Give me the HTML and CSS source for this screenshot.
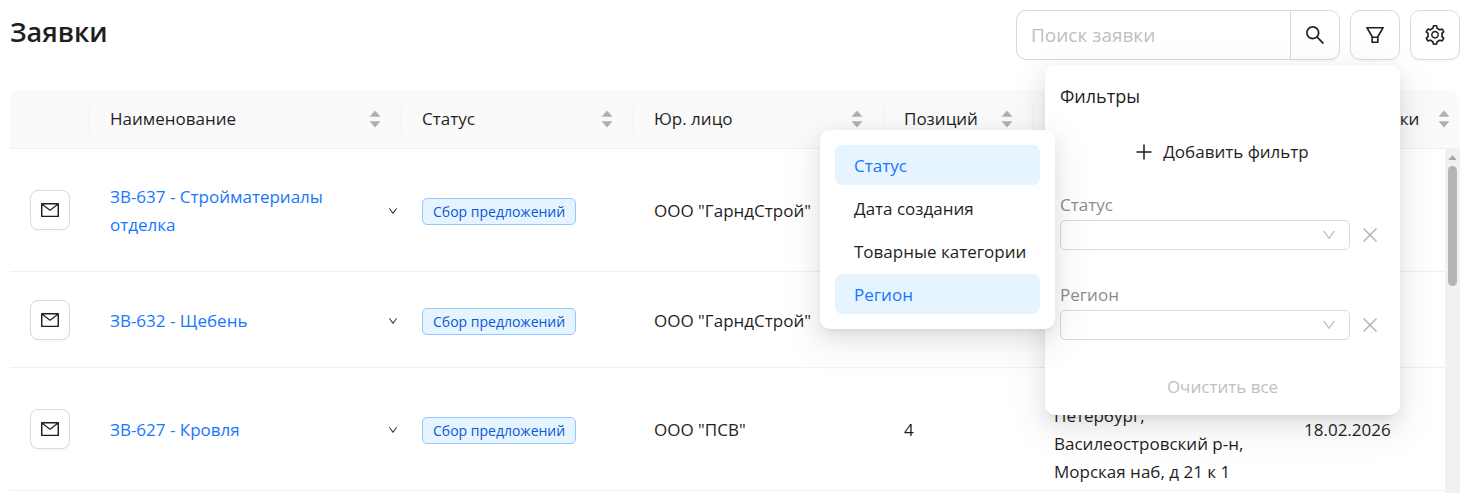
FILE: index.html
```html
<!DOCTYPE html>
<html lang="ru">
<head>
    <meta charset="UTF-8">
    <meta name="viewport" content="width=device-width, initial-scale=1.0">
    <title>Заявки</title>
    <link rel="stylesheet" href="styles.css">
</head>
<body>
    <!-- shared icons -->
    <svg class="sprite" aria-hidden="true">
        <symbol id="mail" viewBox="64 64 896 896"><path d="M928 160H96c-17.7 0-32 14.3-32 32v640c0 17.7 14.3 32 32 32h832c17.7 0 32-14.3 32-32V192c0-17.7-14.3-32-32-32zm-40 110.8V792H136V270.8l-27.6-21.5 39.3-50.5 42.8 33.3h643.1l42.8-33.3 39.3 50.5-27.7 21.5zM833.6 232L512 482 190.4 232l-42.8-33.3-39.3 50.5 27.6 21.5 341.6 265.6a55.99 55.99 0 0068.7 0L888 270.8l27.6-21.5-39.3-50.5-42.7 33.2z"/></symbol>
        <symbol id="down" viewBox="64 64 896 896"><path d="M884 256h-75c-5.1 0-9.9 2.5-12.9 6.6L512 654.2 227.9 262.6c-3-4.1-7.8-6.6-12.9-6.6h-75c-6.5 0-10.3 7.4-6.5 12.7l352.6 486.1c12.8 17.6 39 17.6 51.7 0l352.6-486.1c3.9-5.3.1-12.7-6.4-12.7z"/></symbol>
        <symbol id="sort" viewBox="0 0 12 18"><path d="M6 0.5l5.5 6.2h-11zM6 17.5l5.5-6.2h-11z"/></symbol>
        <symbol id="close" viewBox="0 0 14 14"><path d="M0.5 0.5l13 13M13.5 0.5l-13 13" fill="none" stroke="currentColor" stroke-width="1.5"/></symbol>
    </svg>

    <header class="header">
        <h1 class="title">Заявки</h1>
        <div class="tools">
            <form class="search">
                <input type="search" class="search-input" placeholder="Поиск заявки" aria-label="Поиск заявки">
                <button type="button" class="tool-btn search-btn" aria-label="Найти">
                    <svg class="icon" viewBox="64 64 896 896"><path d="M909.6 854.5L649.9 594.8C690.2 542.7 712 479 712 412c0-80.2-31.3-155.4-87.9-212.1-56.6-56.7-132-87.9-212.1-87.9s-155.5 31.3-212.1 87.9C143.2 256.5 112 331.8 112 412c0 80.1 31.3 155.5 87.9 212.1C256.5 680.8 331.8 712 412 712c67 0 130.6-21.8 182.7-62l259.7 259.6a8.2 8.2 0 0011.6 0l43.6-43.5a8.2 8.2 0 000-11.6zM570.4 570.4C528 612.7 471.8 636 412 636s-116-23.3-158.4-65.6C211.3 528 188 471.8 188 412s23.3-116.1 65.6-158.4C296 211.3 352.2 188 412 188s116.1 23.2 158.4 65.6S636 352.2 636 412s-23.3 116.1-65.6 158.4z"/></svg>
                </button>
            </form>
            <div class="filter">
                <button type="button" class="tool-btn" aria-label="Фильтры">
                    <svg class="icon" viewBox="64 64 896 896"><path d="M880.1 154H143.9c-24.5 0-39.8 26.7-27.5 48L349 597.4V838c0 17.7 14.2 32 31.8 32h262.4c17.6 0 31.8-14.3 31.8-32V597.4L907.7 202c12.2-21.3-3.1-48-27.6-48zM603.4 798H420.6V642h182.9v156zm9.6-236.6l-9.5 16.6h-183l-9.5-16.6L212.7 226h598.6L613 561.4z"/></svg>
                </button>
                <div class="panel">
                    <h2 class="panel-title">Фильтры</h2>
                    <button type="button" class="text-btn add-btn">
                        <svg class="plus" viewBox="0 0 16 16"><path d="M8 0.5v15M0.5 8h15" fill="none" stroke="currentColor" stroke-width="1.5"/></svg>
                        Добавить фильтр
                    </button>
                    <div class="field">
                        <label class="field-label" for="f-status">Статус</label>
                        <div class="field-row">
                            <div class="select">
                                <select id="f-status"><option></option></select>
                                <svg class="arrow"><use href="#down"/></svg>
                            </div>
                            <button type="button" class="remove" aria-label="Удалить"><svg><use href="#close"/></svg></button>
                        </div>
                    </div>
                    <div class="field">
                        <label class="field-label" for="f-region">Регион</label>
                        <div class="field-row">
                            <div class="select">
                                <select id="f-region"><option></option></select>
                                <svg class="arrow"><use href="#down"/></svg>
                            </div>
                            <button type="button" class="remove" aria-label="Удалить"><svg><use href="#close"/></svg></button>
                        </div>
                    </div>
                    <button type="button" class="text-btn clear-btn" disabled>Очистить все</button>

                    <div class="menu">
                        <button type="button" class="menu-item active">Статус</button>
                        <button type="button" class="menu-item">Дата создания</button>
                        <button type="button" class="menu-item">Товарные категории</button>
                        <button type="button" class="menu-item active">Регион</button>
                    </div>
                </div>
            </div>
            <button type="button" class="tool-btn" aria-label="Настройки">
                <svg class="icon" viewBox="64 64 896 896"><path d="M924.8 625.7l-65.5-56c3.1-19 4.7-38.4 4.7-57.8s-1.6-38.8-4.7-57.8l65.5-56a32.03 32.03 0 009.3-35.2l-.9-2.6a443.74 443.74 0 00-79.7-137.9l-1.8-2.1a32.12 32.12 0 00-35.1-9.5l-81.3 28.9c-30-24.6-63.5-44-99.7-57.6l-15.7-85a32.05 32.05 0 00-25.8-25.7l-2.7-.5c-52.1-9.4-106.9-9.4-159 0l-2.7.5a32.05 32.05 0 00-25.8 25.7l-15.8 85.4a351.86 351.86 0 00-99 57.4l-81.9-29.1a32 32 0 00-35.1 9.5l-1.8 2.1a446.02 446.02 0 00-79.7 137.9l-.9 2.6c-4.5 12.5-.8 26.5 9.3 35.2l66.3 56.6c-3.1 18.8-4.6 38-4.6 57.1 0 19.2 1.5 38.4 4.6 57.1L99 625.5a32.03 32.03 0 00-9.3 35.2l.9 2.6c18.1 50.4 44.9 96.9 79.7 137.9l1.8 2.1a32.12 32.12 0 0035.1 9.5l81.9-29.1c29.8 24.5 63.1 43.9 99 57.4l15.8 85.4a32.05 32.05 0 0025.8 25.7l2.7.5a449.4 449.4 0 00159 0l2.7-.5a32.05 32.05 0 0025.8-25.7l15.7-85a350 350 0 0099.7-57.6l81.3 28.9a32 32 0 0035.1-9.5l1.8-2.1c34.8-41.1 61.6-87.5 79.7-137.9l.9-2.6c4.5-12.3.8-26.3-9.3-35zM788.3 465.9c2.5 15.1 3.8 30.6 3.8 46.1s-1.3 31-3.8 46.1l-6.6 40.1 74.7 63.9a370.03 370.03 0 01-42.6 73.6L721 702.8l-31.4 25.8c-23.9 19.6-50.5 35-79.3 45.8l-38.1 14.3-17.9 97a377.5 377.5 0 01-85 0l-17.9-97.2-37.8-14.5c-28.5-10.8-55-26.2-78.7-45.7l-31.4-25.9-93.4 33.2c-17-22.9-31.2-47.6-42.6-73.6l75.5-64.5-6.5-40c-2.4-14.9-3.7-30.3-3.7-45.5 0-15.3 1.2-30.6 3.7-45.5l6.5-40-75.5-64.5c11.3-26.1 25.6-50.7 42.6-73.6l93.4 33.2 31.4-25.9c23.7-19.5 50.2-34.9 78.7-45.7l37.9-14.3 17.9-97.2c28.1-3.2 56.8-3.2 85 0l17.9 97 38.1 14.3c28.7 10.8 55.4 26.2 79.3 45.8l31.4 25.8 92.8-32.9c17 22.9 31.2 47.6 42.6 73.6L781.8 426l6.5 39.9zM512 326c-97.2 0-176 78.8-176 176s78.8 176 176 176 176-78.8 176-176-78.8-176-176-176zm79.2 255.2A111.6 111.6 0 01512 614c-29.9 0-58-11.7-79.2-32.8A111.6 111.6 0 01400 502c0-29.9 11.7-58 32.8-79.2C454 401.6 482.1 390 512 390c29.9 0 58 11.6 79.2 32.8A111.6 111.6 0 01624 502c0 29.9-11.7 58-32.8 79.2z"/></svg>
            </button>
        </div>
    </header>

    <main class="table-wrap">
        <table class="table">
            <colgroup>
                <col class="col-mail">
                <col class="col-name">
                <col class="col-status">
                <col class="col-company">
                <col class="col-count">
                <col class="col-address">
                <col class="col-date">
            </colgroup>
            <thead>
                <tr>
                    <th><div class="th"></div></th>
                    <th><div class="th">Наименование <svg class="sort"><use href="#sort"/></svg></div></th>
                    <th><div class="th">Статус <svg class="sort"><use href="#sort"/></svg></div></th>
                    <th><div class="th">Юр. лицо <svg class="sort"><use href="#sort"/></svg></div></th>
                    <th><div class="th">Позиций <svg class="sort"><use href="#sort"/></svg></div></th>
                    <th><div class="th"></div></th>
                    <th><div class="th">Дата отгрузки <svg class="sort"><use href="#sort"/></svg></div></th>
                </tr>
            </thead>
            <tbody>
                <tr class="tall">
                    <td><button type="button" class="mail-btn" aria-label="Написать"><svg><use href="#mail"/></svg></button></td>
                    <td><div class="name"><a href="#">ЗВ-637 - Стройматериалы отделка</a><svg class="expand"><use href="#down"/></svg></div></td>
                    <td><span class="tag">Сбор предложений</span></td>
                    <td>ООО "ГарндСтрой"</td>
                    <td></td>
                    <td></td>
                    <td></td>
                </tr>
                <tr>
                    <td><button type="button" class="mail-btn" aria-label="Написать"><svg><use href="#mail"/></svg></button></td>
                    <td><div class="name"><a href="#">ЗВ-632 - Щебень</a><svg class="expand"><use href="#down"/></svg></div></td>
                    <td><span class="tag">Сбор предложений</span></td>
                    <td>ООО "ГарндСтрой"</td>
                    <td></td>
                    <td></td>
                    <td></td>
                </tr>
                <tr class="tall">
                    <td><button type="button" class="mail-btn" aria-label="Написать"><svg><use href="#mail"/></svg></button></td>
                    <td><div class="name"><a href="#">ЗВ-627 - Кровля</a><svg class="expand"><use href="#down"/></svg></div></td>
                    <td><span class="tag">Сбор предложений</span></td>
                    <td>ООО "ПСВ"</td>
                    <td>4</td>
                    <td class="address">Петербург, Василеостровский р-н, Морская наб, д 21 к 1</td>
                    <td>18.02.2026</td>
                </tr>
            </tbody>
        </table>
        <div class="scrollbar">
            <svg class="scroll-up" viewBox="0 0 10 6"><path d="M5 0l5 6H0z"/></svg>
            <div class="scroll-thumb"></div>
        </div>
    </main>
</body>
</html>
```
FILE: styles.css
```css
* {
    box-sizing: border-box;
}
body {
    margin: 0;
    padding: 10px 12px 0 10px;
    height: 100vh;
    display: flex;
    flex-direction: column;
    gap: 30px;
    overflow: hidden;
    background: #fff;
    color: #1f1f1f;
    font-family: 'Segoe UI', 'Open Sans', sans-serif;
    font-size: 17px;
    line-height: 28px;
}
button, input, select {
    font: inherit;
    color: inherit;
}
button {
    padding: 0;
    cursor: pointer;
}
svg {
    fill: currentColor;
    display: block;
}
a {
    color: #1677ff;
    text-decoration: none;
}
.sprite {
    position: absolute;
    width: 0;
    height: 0;
}

/* header */
.header {
    display: flex;
    justify-content: space-between;
    align-items: center;
}
.title {
    margin: 0 0 6px;
    font-size: 27px;
    font-weight: 600;
    line-height: 36px;
}
.tools {
    display: flex;
    gap: 10px;
}
.tool-btn {
    width: 50px;
    height: 50px;
    display: flex;
    align-items: center;
    justify-content: center;
    background: #fff;
    border: 1px solid #d9d9d9;
    border-radius: 10px;
    box-shadow: 0 2px 0 rgba(0, 0, 0, 0.02);
}
.icon {
    width: 20px;
    height: 20px;
}
.search {
    display: flex;
}
.search-input {
    width: 274px;
    height: 50px;
    padding: 0 14px;
    border: 1px solid #d9d9d9;
    border-right: 0;
    border-radius: 10px 0 0 10px;
    background: #fff;
    font-size: 19px;
    outline: none;
}
.search-input::placeholder {
    color: #bfbfbf;
}
.search-btn {
    border-radius: 0 10px 10px 0;
}
.filter {
    position: relative;
    z-index: 2;
}

/* filter popup */
.panel, .menu {
    position: absolute;
    padding: 15px;
    background: #fff;
    border-radius: 10px;
    box-shadow: 0 8px 20px rgba(0, 0, 0, 0.08), 0 4px 8px -5px rgba(0, 0, 0, 0.12), 0 12px 35px 10px rgba(0, 0, 0, 0.05);
}
.panel {
    top: 55px;
    right: 0;
    width: 355px;
    display: flex;
    flex-direction: column;
}
.panel-title {
    margin: 0 0 20px;
    font-size: 18px;
    font-weight: 400;
    line-height: 32px;
}
.text-btn {
    height: 40px;
    border: 0;
    background: none;
}
.add-btn {
    display: flex;
    align-items: center;
    justify-content: center;
    gap: 11px;
    margin-bottom: 18px;
}
.plus {
    width: 16px;
    height: 16px;
}
.field {
    margin-bottom: 30px;
}
.field-label {
    display: block;
    height: 30px;
    line-height: 30px;
    color: #8c8c8c;
}
.field-row {
    display: flex;
    align-items: center;
    gap: 13px;
}
.select {
    position: relative;
    width: 290px;
    height: 30px;
}
.select select {
    width: 100%;
    height: 100%;
    appearance: none;
    background: none;
    border: 1px solid #d9d9d9;
    border-radius: 5px;
}
.arrow {
    position: absolute;
    top: 8px;
    right: 14px;
    width: 14px;
    height: 14px;
    color: #bfbfbf;
    pointer-events: none;
}
.remove {
    border: 0;
    background: none;
    color: #b5b5b5;
}
.remove svg {
    width: 14px;
    height: 14px;
}
.clear-btn {
    margin-top: 4px;
    color: #bfbfbf;
    height: 26px;
    line-height: 26px;
}

.menu {
    top: 65px;
    right: 345px;
    width: 235px;
    display: flex;
    flex-direction: column;
    gap: 3px;
}
.menu-item {
    height: 40px;
    padding: 2px 19px 0;
    border: 0;
    border-radius: 7px;
    background: none;
    text-align: left;
    white-space: nowrap;
}
.menu-item.active {
    background: #e6f4ff;
    color: #1677ff;
}

/* table */
.table-wrap {
    position: relative;
    flex: 1;
    min-height: 0;
    overflow: hidden;
    border-radius: 10px 10px 0 0;
}
.table {
    width: 100%;
    table-layout: fixed;
    border-collapse: separate;
    border-spacing: 0;
}
.col-mail { width: 80px; }
.col-name { width: 312px; }
.col-status { width: 232px; }
.col-company { width: 250px; }
.col-count { width: 150px; }
.col-address { width: 250px; }
.table th {
    height: 59px;
    padding: 0;
    background: #fafafa;
    border-bottom: 1px solid #f0f0f0;
    font-weight: 400;
    text-align: left;
}
.th {
    display: flex;
    justify-content: space-between;
    align-items: center;
    min-height: 28px;
    padding: 0 20px;
    border-right: 1px solid #f0f0f0;
}
.table th:last-child .th {
    padding-right: 10px;
    border-right: 0;
}
.sort {
    width: 12px;
    height: 18px;
    color: #b0b0b0;
}
.table td {
    height: 96px;
    padding: 0 20px;
    border-bottom: 1px solid #f0f0f0;
}
.table td + td {
    padding-top: 2px;
}
.table .tall td {
    height: 123px;
}
.table .address {
    padding-bottom: 4px;
    vertical-align: bottom;
}
.mail-btn {
    width: 40px;
    height: 40px;
    display: flex;
    align-items: center;
    justify-content: center;
    background: #fff;
    border: 1px solid #d9d9d9;
    border-radius: 8px;
    box-shadow: 0 2px 0 rgba(0, 0, 0, 0.02);
}
.mail-btn svg {
    width: 18px;
    height: 18px;
}
.name {
    display: flex;
    align-items: center;
    justify-content: space-between;
    gap: 20px;
    margin-right: -16px;
}
.expand {
    flex: none;
    width: 10px;
    height: 10px;
}
.tag {
    display: inline-block;
    padding: 0 10px;
    background: #e6f4ff;
    border: 1px solid #91caff;
    border-radius: 5px;
    color: #0958d9;
    font-size: 14px;
    line-height: 25px;
}

/* scrollbar */
.scrollbar {
    position: absolute;
    top: 59px;
    right: 0;
    bottom: 0;
    width: 15px;
    padding-top: 6px;
    display: flex;
    flex-direction: column;
    align-items: center;
    gap: 6px;
    background: #f1f1f1;
}
.scroll-up {
    width: 9px;
    height: 5px;
    color: #a8a8a8;
}
.scroll-thumb {
    width: 9px;
    height: 120px;
    border-radius: 5px;
    background: #b5b5b5;
}
```
